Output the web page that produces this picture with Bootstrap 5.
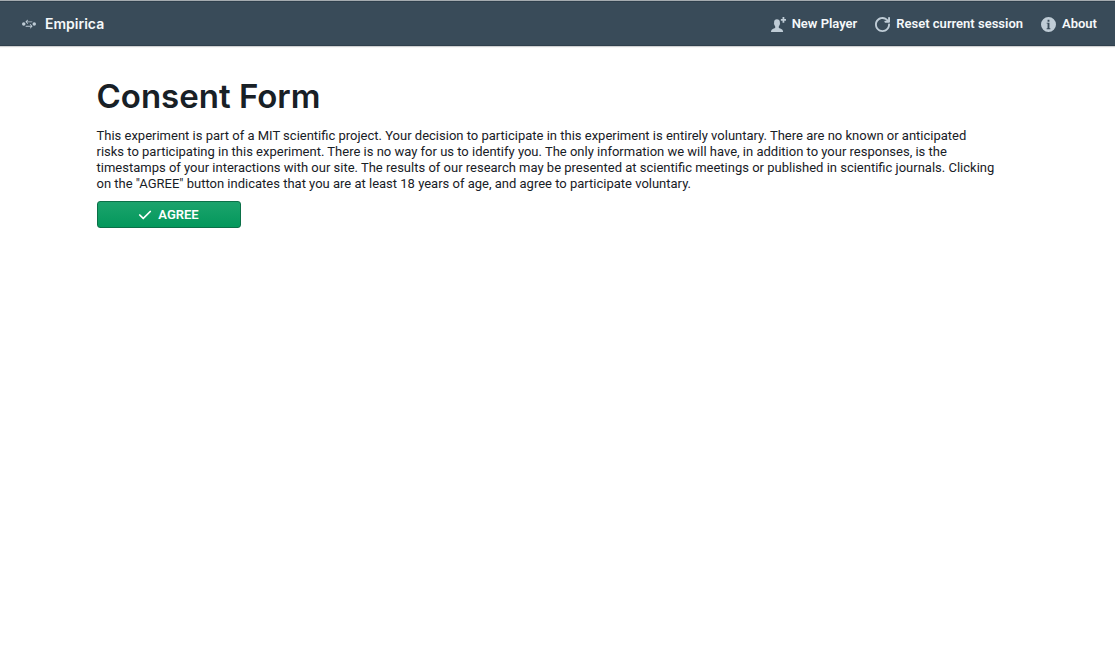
<!DOCTYPE html>
<html lang="en">
<head>
<meta charset="utf-8">
<meta name="viewport" content="width=device-width, initial-scale=1">
<title>Empirica</title>
<link rel="stylesheet" href="https://cdn.jsdelivr.net/npm/bootstrap@5.3.0/dist/css/bootstrap.min.css">
<style>
  body { font-family: Roboto, "Liberation Sans", sans-serif; font-size: 13px; line-height: 16px; color: #182026; background: #fff; }
  .topbar { min-height: 46px; padding: 1px 18px 0 22px; background: #394b59; border-top: 1px solid #a5abb0; box-shadow: inset 0 1px 0 #2f3f4c, inset 0 -1px 0 #2f3f4c, 0 1px 1px #10161a33; }
  .topbar a { color: #f5f8fa; font-weight: 600; text-decoration: none; }
  .topbar svg { fill: #bfccd6; }
  .topbar-links { gap: 18px; }
  .topbar-links a { gap: 6px; }
  .topbar .brand-link { gap: 9px; font-family: Inter, sans-serif; font-size: 14px; }
  .consent { max-width: 922px; padding-top: 30px; }
  .consent h1 { font-family: Inter, "Liberation Sans", sans-serif; font-size: 33px; line-height: 40px; font-weight: 600; margin-bottom: 12px; }
  .consent p { margin-bottom: 9px; }
  .btn-agree { width: 144px; height: 27px; padding: 0; gap: 6px; font-size: 13px; line-height: 16px; font-weight: 600; border-radius: 3px;
    color: #fff; border: 1px solid #0b7048; background: linear-gradient(#1ba36c, #04985c); }
  .btn-agree:hover { color: #fff; background: #0d8050; }
  .btn-agree svg { fill: #fff; }
</style>
</head>
<body>
<nav class="topbar d-flex align-items-center justify-content-between" aria-label="Main">
  <a href="#" class="brand-link d-flex align-items-center">
    <svg width="14" height="14" viewBox="0 0 16 16" aria-hidden="true"><path d="M2 6a2 2 0 1 0 0 4 2 2 0 0 0 0-4zM6.14 7.85c.09.09.21.15.35.15.28 0 .5-.22.5-.5 0-.14-.06-.26-.15-.35L5.7 6h5.8c.28 0 .5-.22.5-.5s-.22-.5-.5-.5H5.7l1.15-1.15c.09-.08.15-.21.15-.35 0-.28-.22-.5-.5-.5-.14 0-.27.06-.36.15l-2 2c-.09.09-.14.21-.14.35s.05.26.14.35l2 2zM14 6a2 2 0 1 0 0 4 2 2 0 0 0 0-4zM9.85 8.15A.5.5 0 0 0 9 8.5c0 .14.06.26.15.35L10.3 10H4.5c-.28 0-.5.22-.5.5s.22.5.5.5h5.8l-1.15 1.15a.5.5 0 0 0-.15.35c0 .28.22.5.5.5.14 0 .26-.06.35-.15l2-2c.09-.09.15-.21.15-.35s-.06-.26-.15-.35l-2-2z"/></svg>
    Empirica
  </a>
  <div class="topbar-links d-flex align-items-center">
    <a href="#" class="d-flex align-items-center">
      <svg width="15" height="15" viewBox="0 0 16 16" aria-hidden="true"><path d="M12.3 0H14.200v2.100h1.800v1.800h-1.800V6h-1.900V3.900h-1.800V2.100h1.800zM6.300 2.500c1.900 0 3.200 1.300 3.200 3.200 0 .5 0 .6-.1 1 .5.2.4 1-.1 1.400-.2.800-.5 1.500-1 2v1.300c.6.800 2.600 1 3.500 1.800.9.700 1 1.600 1.100 2.800H0c.1-1.200.2-2.100 1.100-2.800.9-.8 2.800-1 3.400-1.800v-1.300c-.5-.5-.8-1.200-1-2-.5-.4-.6-1.200-.1-1.400-.1-.4-.1-.5-.1-1 0-1.900 1.100-3.200 3-3.200z"/></svg>
      New Player
    </a>
    <a href="#" class="d-flex align-items-center">
      <svg width="15" height="15" viewBox="0 0 16 16" aria-hidden="true"><path d="M10 5c0 .55.45 1 1 1h4c.55 0 1-.45 1-1V1c0-.55-.45-1-1-1s-1 .45-1 1v2.050C12.540 1.240 10.400 0 8 0 3.580 0 0 3.580 0 8s3.580 8 8 8 8-3.580 8-8c0-.55-.45-1-1-1s-1 .45-1 1c0 3.310-2.690 6-6 6s-6-2.690-6-6 2.690-6 6-6c1.770 0 3.360.780 4.460 2H11c-.55 0-1 .45-1 1z"/></svg>
      Reset current session
    </a>
    <a href="#" class="d-flex align-items-center">
      <svg width="15" height="15" viewBox="0 0 16 16" aria-hidden="true"><path fill-rule="evenodd" d="M8 0a8 8 0 1 0 0 16A8 8 0 0 0 8 0zM7 3h2v2H7zM6 6h3v6h1v1H6v-1h1V7H6z"/></svg>
      About
    </a>
  </div>
</nav>
<main class="consent mx-auto">
  <h1>Consent Form</h1>
  <p>This experiment is part of a MIT scientific project. Your decision to participate in this experiment is entirely voluntary. There are no known or anticipated <br class="d-none d-lg-inline">risks to participating in this experiment. There is no way for us to identify you. The only information we will have, in addition to your responses, is the <br class="d-none d-lg-inline">timestamps of your interactions with our site. The results of our research may be presented at scientific meetings or published in scientific journals. Clicking <br class="d-none d-lg-inline">on the "AGREE" button indicates that you are at least 18 years of age, and agree to participate voluntary.</p>
  <button type="button" class="btn btn-agree d-flex align-items-center justify-content-center">
    <svg width="14" height="14" viewBox="0 0 16 16" aria-hidden="true"><path d="M14 3c-.28 0-.53.11-.71.290L6 10.590l-3.290-3.300a1 1 0 0 0-1.420 1.420l4 4a1 1 0 0 0 1.420 0l8-8A1 1 0 0 0 14 3z"/></svg>
    AGREE
  </button>
</main>
<script src="https://cdn.jsdelivr.net/npm/bootstrap@5.3.0/dist/js/bootstrap.bundle.min.js"></script>
</body>
</html>
